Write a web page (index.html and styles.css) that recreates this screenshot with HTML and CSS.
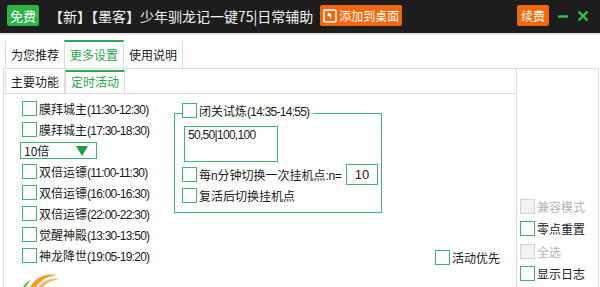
FILE: index.html
```html
<!DOCTYPE html>
<html lang="zh-CN">
<head>
  <meta charset="UTF-8" />
  <title>少年驯龙记一键75|日常辅助</title>
  <link rel="stylesheet" href="styles.css">
</head>
<body>
  <div class="titlebar">
    <span class="badge green">免费</span>
    <span class="title">【新】【墨客】少年驯龙记一键75|日常辅助</span>
    <span class="badge orange add">
      <svg width="14" height="14" viewBox="0 0 14 14"><rect x="1" y="1" width="12" height="12" rx="1.5" fill="none" stroke="#fff" stroke-width="1.6"/><path d="M5 3.5 C8.5 4 9.5 7.5 7 10.5 C8 8 6.5 6.5 4.5 7 Z" fill="#fff"/></svg>
      <span>添加到桌面</span>
    </span>
    <span class="spacer"></span>
    <span class="badge orange">续费</span>
    <svg class="win-btn" width="12" height="12" viewBox="0 0 12 12"><path d="M1 6.5 H11" stroke="#2fc04a" stroke-width="2.4"/></svg>
    <svg class="win-btn" width="12" height="12" viewBox="0 0 12 12"><path d="M1.5 1.5 L10.5 10.5 M10.5 1.5 L1.5 10.5" stroke="#2fc04a" stroke-width="2.4"/></svg>
  </div>

  <div class="tabs outer">
    <div class="tab">为您推荐</div>
    <div class="tab active">更多设置</div>
    <div class="tab">使用说明</div>
  </div>

  <div class="panel">
    <div class="panel-main">
      <div class="tabs inner">
        <div class="tab">主要功能</div>
        <div class="tab active">定时活动</div>
      </div>
      <div class="inner-body">
        <div class="list">
          <label class="check"><span class="box"></span><span>膜拜城主<span class="time">(11:30-12:30)</span></span></label>
          <label class="check"><span class="box"></span><span>膜拜城主<span class="time">(17:30-18:30)</span></span></label>
          <div class="row-select">
            <div class="select">10倍<span class="arrow"></span></div>
          </div>
          <label class="check"><span class="box"></span><span>双倍运镖<span class="time">(11:00-11:30)</span></span></label>
          <label class="check"><span class="box"></span><span>双倍运镖<span class="time">(16:00-16:30)</span></span></label>
          <label class="check"><span class="box"></span><span>双倍运镖<span class="time">(22:00-22:30)</span></span></label>
          <label class="check"><span class="box"></span><span>觉醒神殿<span class="time">(13:30-13:50)</span></span></label>
          <label class="check"><span class="box"></span><span>神龙降世<span class="time">(19:05-19:20)</span></span></label>
          <svg class="logo" width="44" height="22" viewBox="0 0 44 22">
            <path d="M12 22 C18 10 28 6 40 8 C30 9 22 14 18 22 Z" fill="#f39a2c"/>
            <path d="M20 22 C25 14 32 11 42 12 C33 14 27 17 25 22 Z" fill="#f7b955"/>
            <path d="M5 22 C7 17 10 14 14 13 C11 16 9 19 9 22 Z" fill="#6cbf3a"/>
          </svg>
        </div>

        <fieldset class="group">
          <legend><label class="check"><span class="box"></span><span>闭关试炼<span class="time">(14:35-14:55)</span></span></label></legend>
          <div class="textarea">50,50|100,100</div>
          <div class="group-row">
            <label class="check"><span class="box"></span><span>每<span class="lat">n</span>分钟切换一次挂机点<span class="lat">:n=</span></span></label>
            <div class="num">10</div>
          </div>
          <label class="check last"><span class="box"></span><span>复活后切换挂机点</span></label>
        </fieldset>

        <div class="extra">
          <label class="check"><span class="box"></span><span>活动优先</span></label>
        </div>
      </div>
    </div>

    <div class="side">
      <label class="check disabled"><span class="box"></span><span>兼容模式</span></label>
      <label class="check"><span class="box"></span><span>零点重置</span></label>
      <label class="check disabled"><span class="box"></span><span>全选</span></label>
      <label class="check"><span class="box"></span><span>显示日志</span></label>
    </div>
  </div>
</body>
</html>
```

FILE: styles.css
```css
* {
  box-sizing: border-box;
}
html, body {
  height: 287px;
}
body {
  margin: 0;
  overflow: hidden;
  background: #fff;
  color: #1a1a1a;
  font-family: "Noto Sans CJK SC", "Microsoft YaHei", sans-serif;
  font-size: 12px;
  display: flex;
  flex-direction: column;
}

/* title bar */
.titlebar {
  height: 35px;
  flex-shrink: 0;
  background: #1d1d1d;
  border-bottom: 2px solid #e6e6e6;
  display: flex;
  align-items: center;
  padding: 0 11px 2px 7px;
}
.badge {
  height: 21px;
  line-height: 21px;
  padding: 0 4px;
  border-radius: 2px;
  color: #fff;
  font-size: 12px;
}
.badge.green {
  background: #2eb446;
  width: 32px;
  text-align: center;
  font-size: 13px;
  padding: 0;
}
.badge.orange {
  background: #f2680f;
}
.badge.add {
  display: flex;
  align-items: center;
  gap: 2px;
  padding: 0 3px;
  margin-left: 7px;
}
.title {
  color: #f4f4f4;
  font-size: 14px;
  margin-left: 10px;
}
.spacer {
  flex: 1;
}
.win-btn {
  margin-left: 8px;
}

/* tabs */
.tabs {
  display: flex;
  flex-shrink: 0;
}
.tabs.outer {
  padding: 5px 0 0 5px;
}
.tab {
  width: 60px;
  margin-right: -1px;
  text-align: center;
  border: 1px solid #dcdcdc;
  border-bottom: none;
  border-top: 2px solid transparent;
  background: #fff;
}
.tabs.outer .tab {
  height: 28px;
  line-height: 25px;
}
.tab.active {
  color: #27a648;
  border-top-color: #2fa852;
  position: relative;
  z-index: 1;
}
.tabs.inner {
  padding: 1px 0 0 1px;
}
.tabs.inner .tab {
  height: 23px;
  line-height: 20px;
}
.tabs.inner .tab.active {
  margin-left: 1px;
  margin-bottom: -1px;
}

/* panels */
.panel {
  flex: 1;
  min-height: 0;
  display: flex;
  margin: 0 1px 0 3px;
  border: 1px solid #dcdcdc;
  border-bottom: none;
}
.panel-main {
  width: 513px;
  min-height: 0;
  display: flex;
  flex-direction: column;
  border-right: 1px solid #dcdcdc;
}
.inner-body {
  flex: 1;
  min-height: 0;
  overflow: hidden;
  display: flex;
  border-top: 1px solid #dcdcdc;
}

/* checkboxes */
.check {
  display: flex;
  align-items: center;
  height: 21px;
  gap: 2px;
  white-space: nowrap;
}
.box {
  width: 15px;
  height: 15px;
  border: 1px solid #3fb46c;
  background: #fff;
  flex-shrink: 0;
}
.check.disabled {
  color: #b4b4b4;
}
.check.disabled .box {
  border-color: #d2d2d2;
  background: #f2f2f2;
}
.time {
  font-family: "Liberation Sans", Arial, sans-serif;
  font-size: 12px;
  letter-spacing: -0.75px;
}
.lat {
  font-family: "Liberation Sans", Arial, sans-serif;
  font-size: 12px;
  letter-spacing: -0.3px;
}

/* left list */
.list {
  width: 170px;
  flex-shrink: 0;
  padding: 4px 0 0 18px;
}
.row-select {
  height: 21px;
  display: flex;
  align-items: center;
}
.select {
  width: 77px;
  height: 17px;
  margin-left: -2px;
  border: 1px solid #3fb46c;
  display: flex;
  align-items: center;
  justify-content: space-between;
  padding: 0 8px 0 3px;
  font-size: 12px;
}
.arrow {
  width: 0;
  height: 0;
  border-left: 6px solid transparent;
  border-right: 6px solid transparent;
  border-top: 10px solid #1f9e3c;
}
.logo {
  display: block;
  margin: 1px 0 0 -5px;
}

/* group box */
.group {
  width: 208px;
  min-width: 0;
  height: 110px;
  flex-shrink: 0;
  margin: 9px 0 0;
  padding: 0 3px 0 9px;
  border: 1px solid #3fb46c;
}
.group legend {
  padding: 0 4px 6px 0;
  margin-left: -2px;
}
.group legend .check {
  height: 15px;
}
.textarea {
  width: 94px;
  height: 36px;
  margin-top: 2px;
  border: 1px solid #3fb46c;
  padding: 1px 3px;
  font-family: "Liberation Sans", Arial, sans-serif;
  font-size: 12px;
  letter-spacing: -0.7px;
}
.group-row {
  display: flex;
  align-items: center;
  height: 21px;
  margin: 2px 0 0 -2px;
}
.num {
  margin-left: auto;
  width: 32px;
  height: 21px;
  flex-shrink: 0;
  border: 1px solid #3fb46c;
  text-align: center;
  line-height: 19px;
  font-family: "Liberation Sans", Arial, sans-serif;
  font-size: 13px;
}
.check.last {
  margin-left: -2px;
}

/* extra and side columns */
.extra {
  flex: 1;
  display: flex;
  align-items: flex-end;
  justify-content: flex-end;
  padding: 0 16px 19px 0;
}
.side {
  flex: 1;
  display: flex;
  flex-direction: column;
  justify-content: flex-end;
  padding: 0 0 2px 3px;
}
.side .check {
  height: 22.5px;
}
```
